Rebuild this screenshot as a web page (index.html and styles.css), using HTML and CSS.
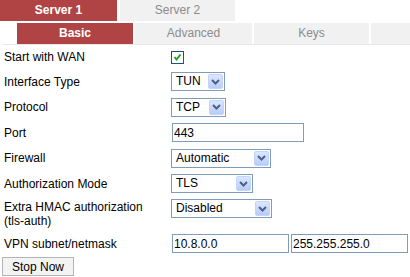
FILE: index.html
```html
<!DOCTYPE html>
<html lang="en">
<head>
    <meta charset="UTF-8">
    <title>VPN Server</title>
    <link rel="stylesheet" href="styles.css">
</head>
<body>
    <div class="tabs top">
        <div class="tab active w117">Server 1</div>
        <div class="tab w115">Server 2</div>
    </div>
    <div class="tabs sub">
        <div class="tab active w116">Basic</div>
        <div class="tab w117">Advanced</div>
        <div class="tab w115">Keys</div>
        <div class="tab fill"></div>
    </div>

    <div class="form">
        <div class="row h24">
            <label>Start with WAN</label>
            <span class="check">
                <svg width="11" height="11" viewBox="0 0 11 11"><polyline points="2.5,5 4.5,7.5 8.5,2.5" fill="none" stroke="#21a121" stroke-width="2"/></svg>
            </span>
        </div>
        <div class="row h25">
            <label>Interface Type</label>
            <div class="sel w52"><span class="val">TUN</span><span class="arrow"><svg width="9" height="6" viewBox="0 0 9 6"><polyline points="1,1 4.5,4.5 8,1" fill="none" stroke="#4d6185" stroke-width="2"/></svg></span></div>
        </div>
        <div class="row h26">
            <label>Protocol</label>
            <div class="sel w53"><span class="val">TCP</span><span class="arrow"><svg width="9" height="6" viewBox="0 0 9 6"><polyline points="1,1 4.5,4.5 8,1" fill="none" stroke="#4d6185" stroke-width="2"/></svg></span></div>
        </div>
        <div class="row h25">
            <label>Port</label>
            <input type="text" class="field w132" value="443">
        </div>
        <div class="row h26">
            <label>Firewall</label>
            <div class="sel w98"><span class="val">Automatic</span><span class="arrow"><svg width="9" height="6" viewBox="0 0 9 6"><polyline points="1,1 4.5,4.5 8,1" fill="none" stroke="#4d6185" stroke-width="2"/></svg></span></div>
        </div>
        <div class="row h25">
            <label>Authorization Mode</label>
            <div class="sel w80"><span class="val">TLS</span><span class="arrow"><svg width="9" height="6" viewBox="0 0 9 6"><polyline points="1,1 4.5,4.5 8,1" fill="none" stroke="#4d6185" stroke-width="2"/></svg></span></div>
        </div>
        <div class="row top-row hmac">
            <label>Extra HMAC authorization<br>(tls-auth)</label>
            <div class="sel w99"><span class="val">Disabled</span><span class="arrow"><svg width="9" height="6" viewBox="0 0 9 6"><polyline points="1,1 4.5,4.5 8,1" fill="none" stroke="#4d6185" stroke-width="2"/></svg></span></div>
        </div>
        <div class="row vpn">
            <label>VPN subnet/netmask</label>
            <div class="pair">
                <input type="text" class="field w117" value="10.8.0.0">
                <input type="text" class="field w117" value="255.255.255.0">
            </div>
        </div>
    </div>

    <button class="stop">Stop Now</button>
</body>
</html>
```

FILE: styles.css
```css
body {
    margin: 0;
    font-family: "Liberation Sans", Arial, sans-serif;
    font-size: 12px;
    color: #000;
    background: #fff;
}

.tabs {
    display: flex;
    height: 21px;
}

.tabs.top {
    gap: 3px;
}

.tabs.sub {
    margin-top: 2px;
    margin-left: 2px;
    padding-left: 15px;
    gap: 2px;
    border-bottom: 1px solid #e8e8e8;
}

.tab {
    background: #f1f1f1;
    color: #8c8c8c;
    line-height: 21px;
    text-align: center;
}

.tab.active {
    background: #b04444;
    color: #fff;
    font-weight: bold;
}

.tab.fill {
    flex: 1;
}

.w115 { width: 115px; }
.w116 { width: 116px; }
.w117 { width: 117px; }

.form {
    padding-left: 4px;
}

.row {
    display: flex;
    align-items: center;
}

.row label {
    width: 167px;
    flex-shrink: 0;
    line-height: 14px;
}

.h24 { height: 24px; }
.h25 { height: 25px; }
.h26 { height: 26px; }

.row.top-row {
    align-items: flex-start;
}

.hmac {
    height: 33px;
}

.hmac label {
    padding-top: 4px;
}

.hmac .sel {
    margin-top: 3px;
}

.vpn {
    margin-top: 5px;
    height: 19px;
}

.vpn .pair {
    margin-left: 1px;
    display: flex;
    gap: 2px;
}

.check {
    width: 11px;
    height: 11px;
    border: 1px solid #1c5180;
    background: #fff;
    display: flex;
}

.sel {
    height: 17px;
    border: 1px solid #7f9db9;
    background: #fff;
    display: flex;
    align-items: center;
    justify-content: space-between;
    padding: 0 1px 0 4px;
    box-sizing: content-box;
}

.sel .val {
    line-height: 17px;
}

.arrow {
    width: 13px;
    height: 13px;
    border: 1px solid #c3d3fd;
    border-radius: 2px;
    background: linear-gradient(#dce7ff, #b7ccfb);
    display: flex;
    align-items: center;
    justify-content: center;
}

.w52 { width: 47px; }
.w53 { width: 48px; }
.w98 { width: 93px; }
.w80 { width: 75px; }
.w99 { width: 94px; }

.field {
    height: 19px;
    box-sizing: border-box;
    border: 1px solid #7f9db9;
    padding: 0 1px;
    margin: 0;
    font-family: "Liberation Sans", Arial, sans-serif;
    font-size: 12px;
    color: #000;
}

.row .w132 {
    width: 132px;
    margin-left: 1px;
}

.pair .w117 {
    width: 117px;
}

.stop {
    display: block;
    margin-top: 4px;
    margin-left: 2px;
    width: 72px;
    height: 19px;
    padding: 0;
    background: #f3f3f3;
    border: 1px solid #b5b5b5;
    border-radius: 0;
    font-family: "Liberation Sans", Arial, sans-serif;
    font-size: 12px;
    color: #000;
}
```
